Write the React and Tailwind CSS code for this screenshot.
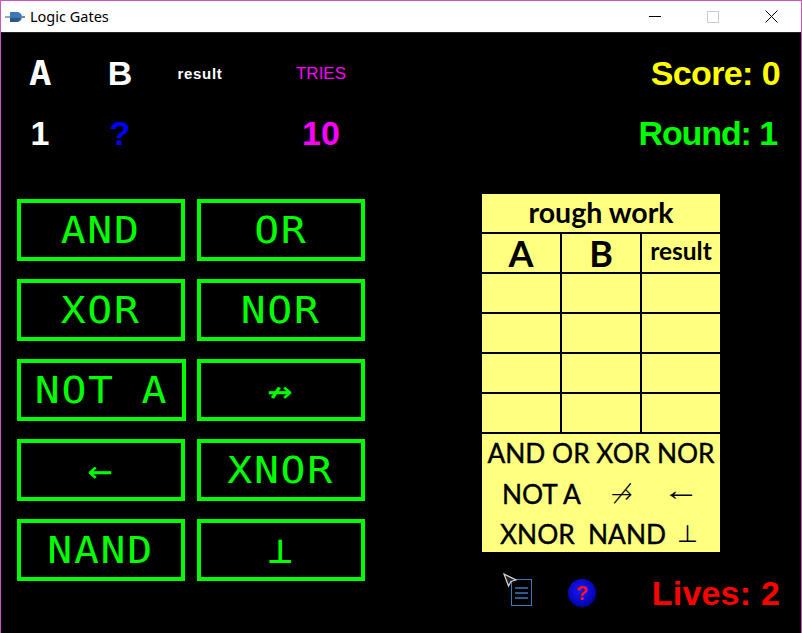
import React from 'react';

const mono = "font-['DejaVu_Sans_Mono',monospace]";
const arial = "font-['Liberation_Sans',sans-serif]";
const calibri = "font-['Lato','DejaVu_Sans',sans-serif]";

const gates = ['AND', 'OR', 'XOR', 'NOR', 'NOT A', '↛', '←', 'XNOR', 'NAND', '⊥'];

const PlugIcon = () => (
  <svg width="20" height="12" viewBox="0 0 20 12">
    <rect x="0" y="5" width="5" height="2" fill="#9aa7b3" />
    <path d="M5 1h7a5 5 0 0 1 0 10H5z" fill="#3a78b8" />
    <path d="M5 7h10a4 4 0 0 1-3 4H5z" fill="#2a5688" />
    <rect x="16" y="5" width="4" height="2" fill="#7d8894" />
  </svg>
);

const DocIcon = () => (
  <svg width="22" height="28" viewBox="0 0 22 28" fill="none" stroke="#3a78c0" strokeWidth="1">
    <rect x="0.5" y="0.5" width="20" height="26" />
    <path d="M4 9h13M4 14h13M4 19h13" strokeWidth="1.4" />
  </svg>
);

const CursorIcon = () => (
  <svg width="14" height="16" viewBox="0 0 14 16" fill="#222" stroke="#d8d8d8" strokeWidth="1.2">
    <path d="M1 1l12 6-5 1.5L5.500 13z" />
  </svg>
);

const App = () => {
  return (
    <div className="w-[802px] h-[633px] bg-black flex flex-col border-x border-t border-[#d44fc0] overflow-hidden">
      {/* title bar */}
      <div className="h-[32px] shrink-0 bg-white flex items-center border-b border-[#222]">
        <div className="ml-[4px] w-[25px] flex"><PlugIcon /></div>
        <span className="text-[14.5px] text-black font-['Noto_Sans',sans-serif]">Logic Gates</span>
        <div className="ml-auto flex items-center">
          <div className="w-[58px] flex justify-center">
            <div className="w-[12px] h-px bg-black" />
          </div>
          <div className="w-[58px] flex justify-center">
            <div className="w-[12px] h-[12px] border border-[#cccccc]" />
          </div>
          <div className="w-[58px] flex justify-center">
            <svg width="13" height="13" viewBox="0 0 13 13" stroke="#000" strokeWidth="1"><path d="M0.500 0.500l12 12M12.500 0.500l-12 12" /></svg>
          </div>
          <div className="w-[1px]" />
        </div>
      </div>

      <div className="flex flex-1">
        {/* left side */}
        <div className="w-[404px] shrink-0 pt-[10px]">
          <div className={`grid grid-cols-[78px_82px_78px_164px] grid-rows-[60px_60px] items-center justify-items-center text-white font-bold text-[34px] leading-none ${arial}`}>
            <span className={`scale-x-110 ${mono}`}>A</span>
            <span>B</span>
            <span className="text-[15px] tracking-[0.7px]">result</span>
            <span className="text-[17px] font-normal text-[#ff00ff]">TRIES</span>
            <span>1</span>
            <span className="text-[#0000ff]">?</span>
            <span />
            <span className="text-[#ff00ff]">10</span>
          </div>

          <div className="mt-[36px] ml-[16px] grid grid-cols-[168px_168px] gap-x-[12px] gap-y-[18px]">
            {gates.map((g) => (
              <button
                key={g}
                className={`h-[62px] ${g === 'NOT A' ? 'w-[169px]' : 'w-[168px]'} border-4 border-[#00ff00] text-[#00ff00] flex items-center justify-center ${mono}`}
              >
                <span className="text-[37px] leading-none tracking-[1.5px] whitespace-pre scale-x-[1.12]">{g}</span>
              </button>
            ))}
          </div>
        </div>

        {/* right side */}
        <div className="flex-1 flex flex-col">
          <div className={`h-[130px] pt-[10px] pr-[21px] grid grid-rows-[60px_60px] items-center justify-items-end font-bold text-[34px] leading-none ${arial}`}>
            <span className="text-[#ffff00] tracking-[-0.600px]">Score: 0</span>
            <span className="text-[#00ff00] tracking-[-1.100px] pr-[3px]">Round: 1</span>
          </div>

          <div className={`mt-[31px] ml-[77px] w-[238px] flex flex-col gap-[2px] text-black ${calibri}`}>
            <div className="h-[38px] bg-[#ffff80] flex items-center justify-center text-[28.500px] font-bold leading-none pb-[1px]">rough work</div>
            <div className="grid grid-cols-3 gap-[2px]">
              <div className="h-[38px] bg-[#ffff80] flex items-center justify-center text-[36px] font-bold leading-none">A</div>
              <div className="h-[38px] bg-[#ffff80] flex items-center justify-center text-[36px] font-bold leading-none">B</div>
              <div className="h-[38px] bg-[#ffff80] flex items-center justify-center text-[24.500px] font-bold leading-none pb-[3px]">result</div>
              {Array.from({ length: 12 }).map((_, i) => (
                <div key={i} className="h-[38px] bg-[#ffff80]" />
              ))}
            </div>
            <div className="h-[118px] bg-[#ffff80] flex flex-col text-[26.300px] leading-none [-webkit-text-stroke:0.4px_#000]">
              <div className="h-[38px] flex items-center justify-center whitespace-pre">AND OR XOR NOR</div>
              <div className="h-[44px] flex items-center">
                <span className="ml-[20px] w-[109px]">NOT A</span>
                <span className="w-[56px] font-['DejaVu_Sans',sans-serif] font-extralight text-[26px] [-webkit-text-stroke:0px]">↛</span>
                <span className="font-['Liberation_Serif',serif] text-[30px] scale-x-125 -translate-x-[1px] -translate-y-[4px] [-webkit-text-stroke:0px]">←</span>
              </div>
              <div className="h-[36px] flex items-center">
                <span className="ml-[18px] w-[88px]">XNOR</span>
                <span className="w-[89px]">NAND</span>
                <span className="font-['DejaVu_Sans',sans-serif] text-[24px] [-webkit-text-stroke:0px]">⊥</span>
              </div>
            </div>
          </div>

          <div className="relative flex-1 flex items-center pt-[1px]">
            <div className="ml-[106px] flex"><DocIcon /></div>
            <div className={`ml-[35px] w-[28px] h-[28px] rounded-full bg-[radial-gradient(circle_at_45%_40%,#1a1aff,#0000a8_75%)] flex items-center justify-center text-[#ff1010] text-[20px] font-bold leading-none ${arial}`}>?</div>
            <span className={`ml-auto mr-[21px] text-[#ff0000] font-bold text-[34px] leading-none tracking-[0.200px] ${arial}`}>Lives: 2</span>
            <div className="absolute left-[98px] top-[21px] flex"><CursorIcon /></div>
          </div>
        </div>
      </div>
    </div>
  );
};

export default App;
